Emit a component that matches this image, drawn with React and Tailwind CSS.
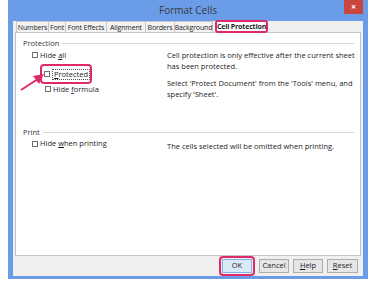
import React from 'react';

const U = ({ children }) => <span className="underline underline-offset-1">{children}</span>;

const Box = () => <span className="inline-block w-[6px] h-[6px] border border-[#707070] bg-white mr-[2px] shrink-0" />;

const tabs = [
  { label: 'Numbers', w: 'w-[33px]' },
  { label: 'Font', w: 'w-[18px]' },
  { label: 'Font Effects', w: 'w-[42px]' },
  { label: 'Alignment', w: 'w-[40px]' },
  { label: 'Borders', w: 'w-[30px]' },
  { label: 'Background', w: 'w-[39px]' },
];

const App = () => {
  return (
    <div className="w-[375px] h-[281px] bg-white overflow-hidden text-[7.5px] text-[#1e1e1e]" style={{ fontFamily: '"Open Sans", "Noto Sans", sans-serif' }}>
      <div className="relative ml-[8px] w-[360px] h-[279px] bg-[#6b9ce8] flex flex-col">
        {/* title bar */}
        <div className="h-[22px] flex items-center justify-center text-[10px] text-[#3a3a3a] relative">
          Format Cells
          <div className="absolute right-[5px] top-0 w-[19px] h-[14px] bg-[#c9463d] flex items-center justify-center text-white text-[9px] font-bold">×</div>
        </div>
        <div className="flex-1 mx-[5px] mb-[3px] bg-[#f0f0f0] flex flex-col px-[2px]">
          {/* tabs */}
          <div className="h-[11px] flex items-end pl-[1px] text-[7px] tracking-[-0.15px]">
            {tabs.map((t) => (
              <div key={t.label} className={`${t.w} h-[11px] border border-b-0 border-[#c6c6c6] -ml-px first:ml-0 bg-[#f3f3f3] flex items-center justify-center whitespace-nowrap leading-none`}>
                {t.label}
              </div>
            ))}
            <div className="ml-[2px] w-[53px] h-[13px] -mb-px border-2 border-[#e02a68] rounded-[3px] bg-white flex items-center justify-center font-bold whitespace-nowrap leading-none relative z-10">
              Cell Protection
            </div>
          </div>
          {/* panel */}
          <div className="h-[224px] bg-white border border-[#c6c6c6] relative">
            <div className="flex items-center mt-[5px] ml-[7px] mr-[6px]">
              <span className="text-[#333]">Protection</span>
              <div className="flex-1 h-px bg-[#d5d5d5] ml-[3px]" />
            </div>
            <div className="flex">
              <div className="w-[151px] pl-[16px]">
                <div className="flex items-center h-[10px] mt-[1px]"><Box /><span>Hide <U>a</U>ll</span></div>
                <div className="mt-[4px] ml-[8px] w-[52px] h-[20px] border-2 border-[#e02a68] rounded-[4px] flex items-center pl-[2px]">
                  <Box /><span className="border border-dotted border-[#555] px-[1px] leading-[9px] whitespace-nowrap"><U>P</U>rotected</span>
                </div>
                <div className="flex items-center h-[10px] ml-[13px]"><Box /><span>Hide <U>f</U>ormula</span></div>
              </div>
              <div className="flex-1 pt-[1px] leading-[10.5px]">
                <p>Cell protection is only effective after the current sheet<br />has been protected.</p>
                <p className="mt-[7px]">Select 'Protect Document' from the 'Tools' menu, and<br />specify 'Sheet'.</p>
              </div>
            </div>
            <div className="flex items-center mt-[28px] ml-[7px] mr-[6px]">
              <span className="text-[#333]">Print</span>
              <div className="flex-1 h-px bg-[#d5d5d5] ml-[3px]" />
            </div>
            <div className="flex items-start">
              <div className="w-[151px] pl-[16px] flex items-center h-[10px]"><Box /><span>Hide <U>w</U>hen printing</span></div>
              <div className="mt-[2px]">The cells selected will be omitted when printing.</div>
            </div>
            {/* annotation arrow */}
            <svg className="absolute left-[3px] top-[38px]" width="30" height="22" viewBox="0 0 30 22">
              <line x1="2" y1="19" x2="19" y2="8" stroke="#e02a68" strokeWidth="2" />
              <polygon points="25,3 14,5 20,13" fill="#e02a68" />
            </svg>
          </div>
          {/* buttons */}
          <div className="flex-1 flex items-center justify-end gap-[4px] pr-[3px]">
            <div className="w-[36px] h-[20px] border-2 border-[#e02a68] rounded-[4px] flex items-center justify-center">
              <div className="w-[30px] h-[14px] bg-[#dbeaf7] border border-[#7eb4ea] flex items-center justify-center">OK</div>
            </div>
            <div className="w-[30px] h-[14px] bg-[#e6e6e6] border border-[#adadad] flex items-center justify-center">Cancel</div>
            <div className="w-[30px] h-[14px] bg-[#e6e6e6] border border-[#adadad] flex items-center justify-center"><span><U>H</U>elp</span></div>
            <div className="w-[31px] h-[14px] bg-[#e6e6e6] border border-[#adadad] flex items-center justify-center"><span><U>R</U>eset</span></div>
          </div>
        </div>
      </div>
    </div>
  );
};

export default App;
